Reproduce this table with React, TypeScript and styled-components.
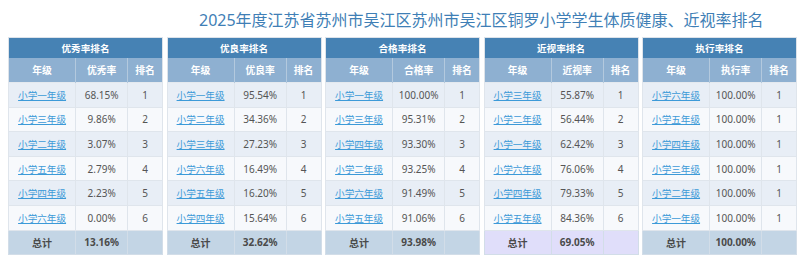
import React from "react";
import styled, { createGlobalStyle } from "styled-components";

const GlobalStyle = createGlobalStyle`
  html, body { margin: 0; padding: 0; background: #ffffff; }
  body {
    font-family: "Noto Sans", "Noto Sans CJK SC", sans-serif;
    width: 800px;
    height: 265px;
    overflow: hidden;
  }
`;

const Page = styled.div`
  padding-left: 8px;
  display: flex;
  flex-direction: column;
`;

const Title = styled.h1`
  margin: 0;
  height: 37px;
  padding-left: 191px;
  display: flex;
  align-items: center;
  font-family: "Noto Sans", "Noto Sans CJK SC", sans-serif;
  font-weight: 400;
  font-size: 16px;
  color: #3f7fb6;
  white-space: nowrap;
`;

const Boards = styled.div`
  display: flex;
  gap: 3.5px;
  width: 789px;
`;

const Table = styled.table`
  flex: none;
  width: 155px;
  box-sizing: border-box;
  border-collapse: collapse;
  table-layout: fixed;
  border: 1px solid #dde3ea;
  font-size: 10px;
`;

const Col = styled.col<{ $w: string }>`
  width: ${(p) => p.$w};
`;

const CaptionCell = styled.th`
  height: 20px;
  padding: 0;
  background: #4682b4;
  color: #ffffff;
  font-weight: 700;
  font-size: 9.6px;
  text-align: center;
  font-family: "Noto Sans CJK SC", sans-serif;
`;

const HeadCell = styled.th`
  height: 24px;
  padding: 0;
  background: #8eb0d1;
  color: #ffffff;
  font-weight: 700;
  font-size: 9.8px;
  text-align: center;
  font-family: "Noto Sans CJK SC", sans-serif;
  border-left: 1px solid #b3c9de;
  &:first-child { border-left: none; }
`;

const Row = styled.tr<{ $odd: boolean }>`
  height: 24.6px;
  background: ${(p) => (p.$odd ? "#e8eef6" : "#f7f9fc")};
`;

const TotalRow = styled.tr<{ $tone: "blue" | "violet" }>`
  height: 24.6px;
  background: ${(p) => (p.$tone === "violet" ? "#e0defa" : "#c3d5e5")};
`;

const Cell = styled.td`
  padding: 0;
  text-align: center;
  color: #555555;
  font-size: 10px;
  border: 1px solid #dfe5ec;
  border-top-color: #e4e9ef;
  white-space: nowrap;
  overflow: hidden;
`;

const TotalCell = styled(Cell)`
  font-weight: 700;
  color: #4a4a4a;
  border-color: #d2dde8;
`;

const TotalLabel = styled.span`
  font-family: "Noto Sans CJK SC", sans-serif;
`;

const GradeLink = styled.a`
  color: #3c9ad8;
  text-decoration: underline;
  font-size: 9.6px;
  font-family: "Noto Sans CJK SC", sans-serif;
  cursor: pointer;
`;

type Entry = [string, string, number];

interface Board {
  title: string;
  metric: string;
  rows: Entry[];
  total: string;
  tone: "blue" | "violet";
}

const boards: Board[] = [
  {
    title: "优秀率排名",
    metric: "优秀率",
    rows: [
      ["小学一年级", "68.15%", 1],
      ["小学三年级", "9.86%", 2],
      ["小学二年级", "3.07%", 3],
      ["小学五年级", "2.79%", 4],
      ["小学四年级", "2.23%", 5],
      ["小学六年级", "0.00%", 6],
    ],
    total: "13.16%",
    tone: "blue",
  },
  {
    title: "优良率排名",
    metric: "优良率",
    rows: [
      ["小学一年级", "95.54%", 1],
      ["小学二年级", "34.36%", 2],
      ["小学三年级", "27.23%", 3],
      ["小学六年级", "16.49%", 4],
      ["小学五年级", "16.20%", 5],
      ["小学四年级", "15.64%", 6],
    ],
    total: "32.62%",
    tone: "blue",
  },
  {
    title: "合格率排名",
    metric: "合格率",
    rows: [
      ["小学一年级", "100.00%", 1],
      ["小学三年级", "95.31%", 2],
      ["小学四年级", "93.30%", 3],
      ["小学二年级", "93.25%", 4],
      ["小学六年级", "91.49%", 5],
      ["小学五年级", "91.06%", 6],
    ],
    total: "93.98%",
    tone: "blue",
  },
  {
    title: "近视率排名",
    metric: "近视率",
    rows: [
      ["小学三年级", "55.87%", 1],
      ["小学二年级", "56.44%", 2],
      ["小学一年级", "62.42%", 3],
      ["小学六年级", "76.06%", 4],
      ["小学四年级", "79.33%", 5],
      ["小学五年级", "84.36%", 6],
    ],
    total: "69.05%",
    tone: "violet",
  },
  {
    title: "执行率排名",
    metric: "执行率",
    rows: [
      ["小学六年级", "100.00%", 1],
      ["小学五年级", "100.00%", 1],
      ["小学四年级", "100.00%", 1],
      ["小学三年级", "100.00%", 1],
      ["小学二年级", "100.00%", 1],
      ["小学一年级", "100.00%", 1],
    ],
    total: "100.00%",
    tone: "blue",
  },
];

const RankBoard: React.FC<{ board: Board }> = ({ board }) => (
  <Table>
    <colgroup>
      <Col $w="43.6%" />
      <Col $w="33.8%" />
      <Col $w="22.6%" />
    </colgroup>
    <thead>
      <tr>
        <CaptionCell colSpan={3}>{board.title}</CaptionCell>
      </tr>
      <tr>
        <HeadCell>年级</HeadCell>
        <HeadCell>{board.metric}</HeadCell>
        <HeadCell>排名</HeadCell>
      </tr>
    </thead>
    <tbody>
      {board.rows.map(([grade, value, rank], i) => (
        <Row key={i} $odd={i % 2 === 0}>
          <Cell>
            <GradeLink>{grade}</GradeLink>
          </Cell>
          <Cell>{value}</Cell>
          <Cell>{rank}</Cell>
        </Row>
      ))}
      <TotalRow $tone={board.tone}>
        <TotalCell>
          <TotalLabel>总计</TotalLabel>
        </TotalCell>
        <TotalCell>{board.total}</TotalCell>
        <TotalCell />
      </TotalRow>
    </tbody>
  </Table>
);

export default function App() {
  return (
    <>
      <GlobalStyle />
      <Page>
        <Title>2025年度江苏省苏州市吴江区苏州市吴江区铜罗小学学生体质健康、近视率排名</Title>
        <Boards>
          {boards.map((b) => (
            <RankBoard key={b.title} board={b} />
          ))}
        </Boards>
      </Page>
    </>
  );
}
